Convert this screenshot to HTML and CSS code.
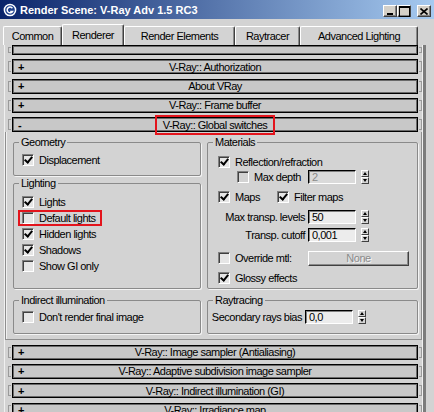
FILE: index.html
```html
<!DOCTYPE html>
<html lang="en">
<head>
  <meta charset="UTF-8">
  <title>Render Scene: V-Ray Adv 1.5 RC3</title>
  <link rel="stylesheet" href="styles.css">
</head>
<body>
  <div class="window">
    <div class="titlebar">
      <svg class="app-icon" width="14" height="14" viewBox="0 0 14 14">
        <circle cx="7" cy="7" r="5.6" fill="#1c3f8c" stroke="#fff" stroke-width="1.5"/>
        <path d="M9.4 5.2 A2.9 2.9 0 1 0 9.6 8.4 L7.2 8.4" fill="none" stroke="#fff" stroke-width="1.5"/>
      </svg>
      <span class="title">Render Scene: V-Ray Adv 1.5 RC3</span>
      <div class="caption-btns">
        <span class="cbtn min"></span>
        <span class="cbtn max"></span>
        <span class="cbtn close">
          <svg width="8" height="7" viewBox="0 0 8 7"><path d="M0.5 0.5 L7.5 6.5 M7.5 0.5 L0.5 6.5" stroke="#000" stroke-width="1.6"/></svg>
        </span>
      </div>
    </div>

    <div class="tabs">
      <div class="tab t-common">Common</div>
      <div class="tab t-renderer active">Renderer</div>
      <div class="tab t-elements">Render Elements</div>
      <div class="tab t-ray">Raytracer</div>
      <div class="tab t-adv">Advanced Lighting</div>
    </div>

    <div class="page">
      <div class="roll-area">
        <div class="rollout stub"><i class="brk"></i><div class="bar"></div><i class="brk right"></i></div>
        <div class="rollout"><i class="brk"></i><div class="bar"><b class="sign">+</b><span class="name">V-Ray:: Authorization</span></div><i class="brk right"></i></div>
        <div class="rollout"><i class="brk"></i><div class="bar"><b class="sign">+</b><span class="name">About VRay</span></div><i class="brk right"></i></div>
        <div class="rollout"><i class="brk"></i><div class="bar"><b class="sign">+</b><span class="name">V-Ray:: Frame buffer</span></div><i class="brk right"></i></div>

        <div class="rollout open"><i class="brk"></i><div class="bar"><b class="sign">-</b><span class="name marked-title">V-Ray:: Global switches</span></div><i class="brk right"></i></div>
        <div class="rollout-body">
          <div class="col">
            <fieldset class="group geo">
              <legend>Geometry</legend>
              <div class="gbody">
                <div class="chk"><span class="box on"></span><span>Displacement</span></div>
              </div>
            </fieldset>
            <fieldset class="group light">
              <legend>Lighting</legend>
              <div class="gbody">
                <div class="chk"><span class="box on"></span><span>Lights</span></div>
                <div class="chk marked"><span class="box"></span><span>Default lights</span></div>
                <div class="chk"><span class="box on"></span><span>Hidden lights</span></div>
                <div class="chk"><span class="box on"></span><span>Shadows</span></div>
                <div class="chk"><span class="box"></span><span>Show GI only</span></div>
              </div>
            </fieldset>
          </div>

          <fieldset class="group mat">
            <legend>Materials</legend>
            <div class="gbody">
              <div class="chk"><span class="box on"></span><span>Reflection/refraction</span></div>
              <div class="srow r-depth">
                <div class="cell indent"><div class="chk"><span class="box off"></span><span>Max depth</span></div></div>
                <span class="field disabled">2</span>
                <span class="spin"><i class="up"></i><i class="down"></i></span>
              </div>
              <div class="srow r-maps">
                <div class="chk w-maps"><span class="box on"></span><span>Maps</span></div>
                <div class="chk"><span class="box on"></span><span>Filter maps</span></div>
              </div>
              <div class="srow r-levels">
                <div class="cell right">Max transp. levels</div>
                <span class="field">50</span>
                <span class="spin"><i class="up"></i><i class="down"></i></span>
              </div>
              <div class="srow r-cutoff">
                <div class="cell right">Transp. cutoff</div>
                <span class="field">0,001</span>
                <span class="spin"><i class="up"></i><i class="down"></i></span>
              </div>
              <div class="srow r-override">
                <div class="cell"><div class="chk"><span class="box"></span><span>Override mtl:</span></div></div>
                <span class="btn">None</span>
              </div>
              <div class="chk r-glossy"><span class="box on"></span><span>Glossy effects</span></div>
            </div>
          </fieldset>

          <fieldset class="group indirect">
            <legend>Indirect illumination</legend>
            <div class="gbody">
              <div class="chk"><span class="box"></span><span>Don't render final image</span></div>
            </div>
          </fieldset>

          <fieldset class="group ray">
            <legend>Raytracing</legend>
            <div class="gbody">
              <div class="srow">
                <div class="cell right wide">Secondary rays bias</div>
                <span class="field">0,0</span>
                <span class="spin"><i class="up"></i><i class="down"></i></span>
              </div>
            </div>
          </fieldset>
        </div>

        <div class="rollout"><i class="brk"></i><div class="bar"><b class="sign">+</b><span class="name">V-Ray:: Image sampler (Antialiasing)</span></div><i class="brk right"></i></div>
        <div class="rollout"><i class="brk"></i><div class="bar"><b class="sign">+</b><span class="name">V-Ray:: Adaptive subdivision image sampler</span></div><i class="brk right"></i></div>
        <div class="rollout"><i class="brk"></i><div class="bar"><b class="sign">+</b><span class="name">V-Ray:: Indirect illumination (GI)</span></div><i class="brk right"></i></div>
        <div class="rollout"><i class="brk"></i><div class="bar"><b class="sign">+</b><span class="name">V-Ray:: Irradiance map</span></div><i class="brk right"></i></div>
      </div>
      <div class="scrollbar"></div>
    </div>
  </div>
</body>
</html>
```

FILE: styles.css
```css
* {
  box-sizing: border-box;
}

body {
  margin: 0;
  background: #d3d3d3;
  font-family: "Liberation Sans", Arial, sans-serif;
  font-size: 11px;
  letter-spacing: -0.5px;
  color: #000;
}

.window {
  width: 434px;
  height: 412px;
  overflow: hidden;
  background: #d3d3d3;
}

/* title bar */
.titlebar {
  height: 19px;
  display: flex;
  align-items: center;
  padding-left: 3px;
  background: linear-gradient(to right, #0a246a, #a6caf0);
}

.app-icon {
  display: block;
}

.title {
  margin-left: 3px;
  color: #fff;
  font-weight: bold;
  letter-spacing: 0;
}

.caption-btns {
  display: flex;
  margin-left: auto;
  margin-right: 3px;
  margin-top: 3px;
}

.cbtn {
  width: 14px;
  height: 12px;
  display: flex;
  align-items: center;
  justify-content: center;
  background: #d4d0c8;
  border: 1px solid;
  border-color: #fff #404040 #404040 #fff;
  box-shadow: inset -1px -1px 0 #808080;
}

.cbtn.min::after {
  content: "";
  width: 6px;
  height: 2px;
  margin-top: 5px;
  background: #000;
}

.cbtn.max {
  margin-right: 6px;
}

.cbtn.max::after {
  content: "";
  width: 9px;
  height: 8px;
  border: 1px solid #000;
  border-top-width: 2px;
}

.cbtn svg {
  display: block;
}

/* tabs */
.tabs {
  height: 26px;
  display: flex;
  align-items: flex-end;
  padding-left: 3px;
}

.tab {
  height: 19px;
  display: flex;
  align-items: center;
  justify-content: center;
  border: 1px solid;
  border-bottom: none;
  border-color: #fff #404040 transparent #fff;
  border-radius: 2px 2px 0 0;
  box-shadow: inset -1px 0 0 #8a8a8a;
}

.tab.active {
  height: 21px;
}

.t-common { width: 59px; }
.t-renderer { width: 62px; }
.t-elements { width: 111px; }
.t-ray { width: 65px; }
.t-adv { width: 118px; }

/* rollout page */
.page {
  height: 367px;
  display: flex;
  padding-left: 4px;
}

.roll-area {
  width: 418px;
  flex: none;
  overflow: hidden;
  border-left: 1px solid #f0f0f0;
}

.scrollbar {
  width: 4px;
  border-left: 1px solid #f0f0f0;
  background: #7c7c7c;
}

.rollout {
  height: 15px;
  display: flex;
  align-items: center;
  margin: 0 0 4.33px 3px;
}

.rollout.stub {
  height: 10px;
}

.rollout.open {
  margin-bottom: 0;
}

.brk {
  width: 3px;
  height: 11px;
  border: 1px solid #9a9a9a;
  border-right: none;
}

.brk.right {
  border-left: none;
  border-right: 1px solid #9a9a9a;
}

.stub .brk {
  height: 6px;
}

.bar {
  width: 406px;
  height: 100%;
  margin: 0 1px;
  display: grid;
  grid-template-columns: 1fr auto 1fr;
  align-items: center;
  background: #c8c8c8;
  border: 1px solid #000;
  box-shadow: inset 0 0 0 1px #6a6a6a;
}

.sign {
  justify-self: start;
  padding-left: 5px;
}

.name {
  grid-column: 2;
  white-space: nowrap;
}

.marked-title {
  height: 20px;
  margin: -4px 0;
  padding: 0 6px;
  display: inline-flex;
  align-items: center;
  border: 2px solid #e3141c;
}

.rollout-body {
  margin-bottom: 4.33px;
  padding: 4px 3px 5px 7px;
  display: grid;
  grid-template-columns: 188px 211px;
  column-gap: 6px;
  row-gap: 5px;
  border: 1px solid #8e8e8e;
  border-top: none;
  box-shadow: inset 1px 0 0 #f0f0f0;
}

.col {
  display: flex;
  flex-direction: column;
  gap: 1px;
}

/* group boxes */
.group {
  margin: 0;
  padding: 0;
  min-width: 0;
  border: 1px solid #8a8a8a;
  border-radius: 2px;
  box-shadow: 1px 1px 0 #f4f4f4;
}

.group legend {
  height: 12px;
  margin-left: 5px;
  padding: 0 2px;
  line-height: 12px;
}

.light {
  flex: 1;
}

.geo .gbody { padding: 4px 0 7px 8px; }
.light .gbody { padding: 5px 0 0 8px; }
.mat .gbody { padding: 6px 0 2px 10px; }
.indirect .gbody { padding: 3px 0 8px 8px; }
.ray .gbody { padding: 3px 0 8px 2px; }

/* controls */
.chk {
  height: 16px;
  display: flex;
  align-items: center;
  white-space: nowrap;
}

.box {
  width: 12px;
  height: 12px;
  flex: none;
  display: flex;
  align-items: center;
  justify-content: center;
  margin-right: 5px;
  background: #e6e6e6;
  border: 1px solid;
  border-color: #808080 #fff #fff #808080;
  box-shadow: inset 1px 1px 0 #404040;
}

.box.off {
  background: #d3d3d3;
}

.box.on::after {
  content: "";
  width: 3px;
  height: 6px;
  margin: -2px 0 0 1px;
  border: solid #000;
  border-width: 0 2px 2px 0;
  transform: rotate(40deg);
}

.chk.marked {
  width: fit-content;
  margin-left: -4px;
  padding: 0 6px 0 4px;
  outline: 2px solid #e3141c;
  outline-offset: -2px;
}

.srow {
  height: 16px;
  display: flex;
  align-items: center;
}

.r-depth { margin-top: -1px; }
.r-maps { margin-top: 4px; }
.r-levels { margin-top: 4px; }
.r-cutoff { margin-top: 2px; }
.r-override { margin-top: 7px; }
.r-glossy { margin-top: 4px; }

.w-maps {
  width: 59px;
}

.cell {
  width: 87px;
  flex: none;
  white-space: nowrap;
}

.cell.indent {
  padding-left: 19px;
}

.cell.right {
  text-align: right;
}

.cell.wide {
  width: 92px;
}

.field {
  width: 48px;
  height: 14px;
  margin-left: 3px;
  padding-left: 3px;
  line-height: 12px;
  background: #ececec;
  border: 1px solid;
  border-color: #000 #fff #fff #000;
  box-shadow: inset 1px 1px 0 #808080;
}

.field.disabled {
  color: #8a8a8a;
  background: #dadada;
}

.spin {
  width: 8px;
  height: 14px;
  margin-left: 5px;
  display: flex;
  flex-direction: column;
}

.spin i {
  height: 7px;
  display: flex;
  align-items: center;
  justify-content: center;
  background: #d4d4d4;
  border: 1px solid;
  border-color: #fff #404040 #404040 #fff;
}

.spin .up::after {
  content: "";
  border-left: 2.5px solid transparent;
  border-right: 2.5px solid transparent;
  border-bottom: 3px solid #000;
}

.spin .down::after {
  content: "";
  border-left: 2.5px solid transparent;
  border-right: 2.5px solid transparent;
  border-top: 3px solid #000;
}

.btn {
  width: 101px;
  height: 15px;
  margin-left: 3px;
  display: flex;
  align-items: center;
  justify-content: center;
  color: #8a8a8a;
  text-shadow: 1px 1px 0 #f4f4f4;
  border: 1px solid;
  border-color: #fff #404040 #404040 #fff;
  box-shadow: inset -1px -1px 0 #8a8a8a;
}
```
